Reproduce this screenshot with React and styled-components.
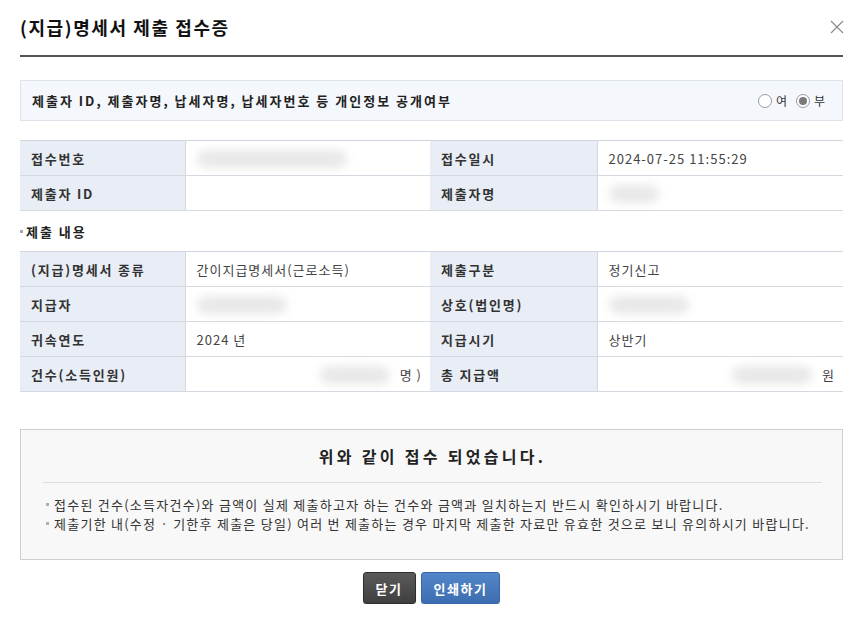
import React, { useState } from 'react';
import styled, { createGlobalStyle } from 'styled-components';

const GlobalStyle = createGlobalStyle`
	html, body {
		margin: 0;
		padding: 0;
		background: #fff;
	}
	body {
		font-family: 'Noto Sans CJK KR', 'Noto Sans', sans-serif;
		color: #222;
		font-size: 13px;
		letter-spacing: 1px;
	}
	* { box-sizing: border-box; }
`;

const summary = [
	[
		{ label: '접수번호', blur: 150, blurAt: 'start' },
		{ label: '접수일시', value: '2024-07-25 11:55:29' },
	],
	[
		{ label: '제출자 ID', blur: 0 },
		{ label: '제출자명', blur: 50, blurAt: 'start' },
	],
];

const details = [
	[
		{ label: '(지급)명세서 종류', value: '간이지급명세서(근로소득)' },
		{ label: '제출구분', value: '정기신고' },
	],
	[
		{ label: '지급자', blur: 90, blurAt: 'start' },
		{ label: '상호(법인명)', blur: 80, blurAt: 'start' },
	],
	[
		{ label: '귀속연도', value: '2024 년' },
		{ label: '지급시기', value: '상반기' },
	],
	[
		{ label: '건수(소득인원)', blur: 70, blurAt: 'end', unit: '명 )' },
		{ label: '총 지급액', blur: 80, blurAt: 'end', unit: '원' },
	],
];

function App() {
	const [open, setOpen] = useState('no');

	const renderRows = (rows) =>
		rows.map((row, i) => (
			<tr key={i}>
				{row.map((cell) => (
					<React.Fragment key={cell.label}>
						<HeadCell>{cell.label}</HeadCell>
						<ValueCell $end={cell.blurAt === 'end'}>
							{cell.value}
							{cell.blur > 0 && <Blurred style={{ width: cell.blur }} />}
							{cell.unit && <Unit>{cell.unit}</Unit>}
						</ValueCell>
					</React.Fragment>
				))}
			</tr>
		));

	return (
		<Page>
			<GlobalStyle />
			<Header>
				<Title>(지급)명세서 제출 접수증</Title>
				<CloseBtn aria-label='닫기'>
					<svg width='14' height='14' viewBox='0 0 14 14'>
						<path d='M1 1 L13 13 M13 1 L1 13' stroke='#888' strokeWidth='1.1' fill='none' />
					</svg>
				</CloseBtn>
			</Header>

			<PrivacyBox>
				<strong>제출자 ID, 제출자명, 납세자명, 납세자번호 등 개인정보 공개여부</strong>
				<RadioGroup>
					<label>
						<Radio type='radio' name='open' checked={open === 'yes'} onChange={() => setOpen('yes')} />여
					</label>
					<label>
						<Radio type='radio' name='open' checked={open === 'no'} onChange={() => setOpen('no')} />부
					</label>
				</RadioGroup>
			</PrivacyBox>

			<InfoTable $top={19}>
				<colgroup>
					<col style={{ width: 165 }} />
					<col style={{ width: 245 }} />
					<col style={{ width: 167 }} />
					<col />
				</colgroup>
				<tbody>{renderRows(summary)}</tbody>
			</InfoTable>

			<SectionTitle>제출 내용</SectionTitle>

			<InfoTable $top={0}>
				<colgroup>
					<col style={{ width: 165 }} />
					<col style={{ width: 245 }} />
					<col style={{ width: 167 }} />
					<col />
				</colgroup>
				<tbody>{renderRows(details)}</tbody>
			</InfoTable>

			<NoticeBox>
				<NoticeTitle>위와 같이 접수 되었습니다.</NoticeTitle>
				<NoticeList>
					<li>접수된 건수(소득자건수)와 금액이 실제 제출하고자 하는 건수와 금액과 일치하는지 반드시 확인하시기 바랍니다.</li>
					<li>제출기한 내(수정 · 기한후 제출은 당일) 여러 번 제출하는 경우 마지막 제출한 자료만 유효한 것으로 보니 유의하시기 바랍니다.</li>
				</NoticeList>
			</NoticeBox>

			<ButtonRow>
				<Button $variant='dark'>닫기</Button>
				<Button $variant='blue'>인쇄하기</Button>
			</ButtonRow>
		</Page>
	);
}

const Page = styled.div`
	width: 860px;
	padding: 0 17px 0 20px;
`;

const Header = styled.div`
	height: 57px;
	display: flex;
	justify-content: space-between;
	align-items: center;
	padding-bottom: 2px;
	border-bottom: 2px solid #555;
`;

const Title = styled.h1`
	margin: 0;
	font-size: 18px;
	font-weight: 700;
	color: #111;
	letter-spacing: 1.6px;
`;

const CloseBtn = styled.button`
	border: 0;
	background: none;
	padding: 0;
	margin-right: -1px;
	display: flex;
	cursor: pointer;
`;

const PrivacyBox = styled.div`
	margin-top: 23px;
	height: 41px;
	border: 1px solid #dfe3ea;
	background: #f4f7fb;
	display: flex;
	align-items: center;
	justify-content: space-between;
	padding: 0 16px 0 11px;

	strong {
		font-size: 13px;
		font-weight: 700;
		letter-spacing: 2px;
		color: #222;
	}
`;

const RadioGroup = styled.div`
	display: flex;
	gap: 8px;
	font-size: 12px;
	color: #333;

	label {
		display: flex;
		align-items: center;
		gap: 4px;
	}
`;

const Radio = styled.input`
	appearance: none;
	margin: 0;
	width: 14px;
	height: 14px;
	border: 1px solid #9a9a9a;
	border-radius: 50%;
	background: #fff;
	display: grid;
	place-content: center;

	&:checked::before {
		content: '';
		width: 8px;
		height: 8px;
		border-radius: 50%;
		background: #7a7a7a;
	}
`;

const InfoTable = styled.table`
	width: 100%;
	margin-top: ${(p) => p.$top}px;
	border-collapse: collapse;
	table-layout: fixed;
	border-top: 1px solid #cfd5df;

	tr {
		height: 35px;
		border-bottom: 1px solid #d5d9e0;
	}
`;

const HeadCell = styled.th`
	background: #e8edf6;
	text-align: left;
	padding: 0 11px;
	font-size: 13px;
	font-weight: 700;
	letter-spacing: 1.8px;
	color: #333;
	border-right: 1px solid #d3d8e0;
`;

const ValueCell = styled.td`
	padding: 0 11px;
	font-size: 13px;
	color: #444;
	white-space: nowrap;

	& > * {
		vertical-align: middle;
	}

	${(p) => (p.$end ? 'text-align: right; padding-right: 8px;' : '')}
`;

const Blurred = styled.span`
	display: inline-block;
	height: 18px;
	background: #e8e8e8;
	border-radius: 9px;
	filter: blur(5px);
`;

const Unit = styled.span`
	margin-left: 10px;
	color: #444;
`;

const SectionTitle = styled.h2`
	margin: 0;
	height: 40px;
	display: flex;
	align-items: center;
	font-size: 13px;
	font-weight: 700;
	letter-spacing: 2px;
	color: #222;

	&::before {
		content: '';
		width: 3px;
		height: 3px;
		background: #aaa;
		margin-right: 3px;
	}
`;

const NoticeBox = styled.div`
	margin-top: 37px;
	height: 131px;
	border: 1px solid #cfcfcf;
	background: #f8f8f8;
	padding: 0 20px 0 12px;
`;

const NoticeTitle = styled.h3`
	margin: 0 0 0 10px;
	height: 53px;
	display: flex;
	align-items: center;
	justify-content: center;
	font-size: 16px;
	font-weight: 700;
	color: #222;
	letter-spacing: 3.3px;
	border-bottom: 1px solid #dedede;
`;

const NoticeList = styled.ul`
	list-style: none;
	margin: 12px 0 0;
	padding: 0 0 0 13px;

	li {
		display: flex;
		align-items: center;
		font-size: 13px;
		color: #333;
		line-height: 19px;
		letter-spacing: 1.25px;
		white-space: nowrap;
	}

	li::before {
		content: '';
		width: 3px;
		height: 3px;
		background: #b0b0b0;
		margin: 0 5px 0 0;
		flex-shrink: 0;
	}
`;

const ButtonRow = styled.div`
	display: flex;
	justify-content: center;
	gap: 5px;
	margin-top: 12px;
`;

const Button = styled.button`
	height: 32px;
	padding: 0 12px;
	border-radius: 3px;
	font-family: inherit;
	font-size: 13px;
	font-weight: 700;
	letter-spacing: 1.5px;
	color: #fff;
	cursor: pointer;
	border: 1px solid ${(p) => (p.$variant === 'dark' ? '#2e2e2e' : '#3a69a8')};
	background: ${(p) =>
		p.$variant === 'dark'
			? 'linear-gradient(#5a5a5a, #3f3f3f)'
			: 'linear-gradient(#5386c8, #3c6db0)'};
	box-shadow: 0 1px 1px rgba(0, 0, 0, 0.2);
`;

export default App;
